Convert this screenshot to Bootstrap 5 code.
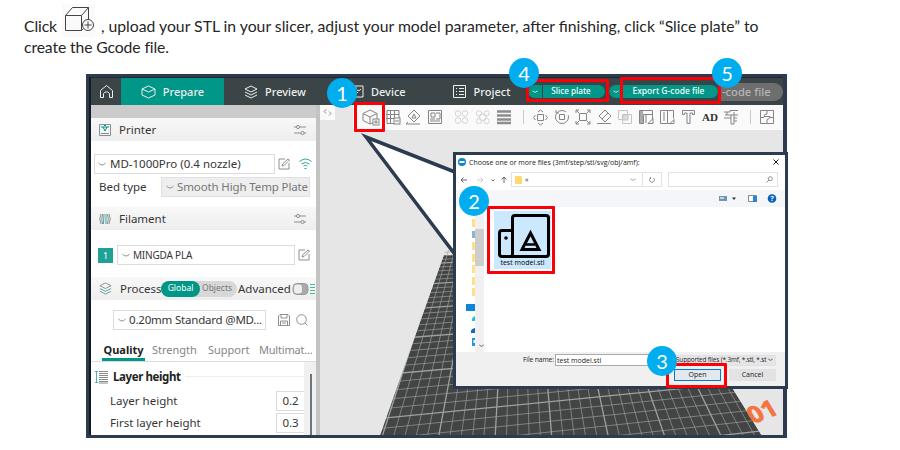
<!DOCTYPE html>
<html lang="en">
<head>
<meta charset="utf-8">
<meta name="viewport" content="width=device-width, initial-scale=1">
<title>Slicing guide</title>
<link rel="stylesheet" href="https://cdn.jsdelivr.net/npm/bootstrap@5.3.0/dist/css/bootstrap.min.css">
<style>
:root{--teal:#009688;--navy:#2d3b50;--hot:#fb0007;--blue:#00adef}
body{width:900px;height:450px;overflow:hidden;background:#fff;color:#363636;font:11.5px/1 "Noto Sans","Open Sans",sans-serif}
svg{display:block;flex:none;fill:none;stroke:currentColor;stroke-width:1}
.solid{stroke:none}
.intro{height:74px;padding:4px 0 0 24px;font:15.75px/20px Lato,"Open Sans",sans-serif;color:#262626;white-space:nowrap}
.intro-top{height:33px}
.intro-top span{padding-top:12px}
.tight{letter-spacing:-.13px}
.cube-shot{width:33px;height:33px;margin:0 6px 0 5px;background:#fafafa;color:#444}
.stage{width:701px;height:364px;margin-left:86px}
.frame{border:3px solid var(--navy);border-right-width:4px;background:#e6e6e6;overflow:hidden;box-shadow:inset 2px 1px 0 #151b20}
.topbar{height:28px;margin-left:2px;background:#3b4446;color:#eceeee;font-size:11px;font-weight:500;border-top:1px solid #20282b}
.topbar>div{height:27px}
.home{width:30px}
.prep{width:103px;background:var(--teal);gap:7px}
.pill{height:13px;background:var(--teal);color:#fff;font-size:8.200px;font-weight:500;white-space:nowrap}
.grayed{background:#6e6e6e;color:#b5b5b5;height:18px;font-size:11.200px}
.left{width:225px;background:#fff;margin-left:2px;white-space:nowrap}
.strip{height:13px;background:#cbcbcb}
.head{height:23px;background:linear-gradient(#f8f8f8,#eee);padding:0 10px 0 8px}
.box{border:1px solid #dcdcdc;background:#fff;overflow:hidden}
.ic{color:#8b8f90}
.gut{width:4px;background:#c3c3c3}
.tools{height:25px;margin-left:33px;background:#fafafa;color:#858585}
.fold{width:15px;height:15px;background:#fafafa}
.tabs-row{height:22px;font-size:11px;color:#858585;border-bottom:1px solid #ddd}
.tabs-row b{color:#222;border-bottom:3px solid var(--teal);height:21px;width:43px}
.val{width:28px;height:20px;font-size:11.5px;border-right:0}
.scroller{width:12px;background:#f0f0f0;padding:12px 4px 0 6px}
.snug{letter-spacing:-.2px}
.title-b{letter-spacing:-.4px;color:#222}
.dlg{left:367px;top:78px;width:335px;height:237px;border:3px solid var(--navy);background:#fff;font:7px/1 "Open Sans",sans-serif;color:#222;white-space:nowrap}
.dlg .box{border-color:#e2e2e2}
.cmd{height:18px;background:#f4f6f9}
.foot{height:34px;background:#f0f0f0}
.sidebar{width:28px}
.sbar{width:9px;background:#f0f0f0}
.picked{width:57px;height:58px;background:#cce8ff;color:#000}
.filter-text{font-size:6.400px;letter-spacing:-.13px}
.dot{width:30px;height:30px;border-radius:50%;background:var(--blue);color:#fff;font:20px/30px Lato,sans-serif;text-align:center;z-index:5}
.ring{border:3px solid var(--hot);z-index:4;border-radius:1px}
</style>
<script src="https://cdn.jsdelivr.net/npm/bootstrap@5.3.0/dist/js/bootstrap.bundle.min.js"></script>
</head>
<body>
<svg width="0" height="0" class="position-absolute">
<symbol id="edit" viewBox="0 0 12 12"><path d="M7 1H1v10h10V5M4 8l1-2.500L10 1l1.500 1L6 7.500z"/></symbol>
<symbol id="chev" viewBox="0 0 8 5"><path d="M.5 1q3.500 4 7 0"/></symbol>
<symbol id="tune" viewBox="0 0 12 12"><path d="M0 3h2.500M5.500 3H12M0 9h7M10 9h2"/><circle cx="4" cy="3" r="1.600"/><circle cx="8.500" cy="9" r="1.600"/></symbol>
<symbol id="layers" viewBox="0 0 14 14"><path d="M7 1l6 3-6 3-6-3zM1 7l6 3 6-3M1 10l6 3 6-3"/></symbol>
</svg>

<div class="intro">
  <div class="intro-top d-flex"><span class="tight">Click</span>
    <svg class="cube-shot" viewBox="0 0 33 33"><path d="M3.500 11.500h16v15h-16zM3.500 11.500l7-8h16l-7 8M26.500 3.500v12M19.500 26.500l2-2"/><circle cx="26" cy="21" r="5.500"/><path d="M22.500 21h7M26 17.500v7"/></svg>
    <span>, upload your STL in your slicer, adjust your model parameter, after finishing, click “Slice plate” to</span></div>
  <div class="tight">create the Gcode file.</div>
</div>

<main class="stage position-relative">
<div class="frame h-100 d-flex flex-column">
  <div class="topbar d-flex align-items-center flex-shrink-0">
    <div class="home d-flex align-items-center justify-content-center"><svg width="15" height="15" viewBox="0 0 15 15"><path d="M1.500 6.500l6-5 6 5v7h-3v-4q-3-3.500-6 0v4h-3z"/></svg></div>
    <div class="prep d-flex align-items-center justify-content-center"><svg width="15" height="14" viewBox="0 0 15 14"><path d="M7.500 1L14 4v6l-6.500 3L1 10V4zM1 4l6.500 3L14 4"/></svg><span>Prepare</span></div>
    <div class="d-flex align-items-center" style="margin-left:20px;gap:7px"><svg width="14" height="14"><use href="#layers"/></svg><span>Preview</span></div>
    <div class="d-flex align-items-center" style="margin-left:45px;gap:7px"><svg width="13" height="13" viewBox="0 0 13 13"><path d="M1 1h11v11H1zM4 10l3-3M3 3h3M6 5q2 2 4-1"/></svg><span>Device</span></div>
    <div class="d-flex align-items-center" style="margin-left:47px;gap:8px"><svg width="13" height="13" viewBox="0 0 13 13"><path d="M.5.5h12v12H.500zM3 3.500h1M6 3.500h5M3 6.500h1M6 6.500h5M3 9.500h1M6 9.500h5"/></svg><span>Project</span></div>
    <div class="d-flex align-items-center ms-auto">
      <span class="pill rounded-start-pill d-flex align-items-center justify-content-center" style="width:14px"><svg width="6" height="4"><use href="#chev"/></svg></span>
      <span class="pill rounded-end-pill d-flex align-items-center justify-content-center" style="width:62px;margin-left:1px;padding-right:6px">Slice plate</span>
      <span class="pill rounded-start-pill d-flex align-items-center justify-content-center" style="width:13px;margin-left:4px"><svg width="6" height="4"><use href="#chev"/></svg></span>
      <span class="pill rounded-end-pill d-flex align-items-center justify-content-center" style="width:95px;margin-left:1px;padding-right:4px;font-size:8.500px">Export G-code file</span>
      <span class="grayed rounded-end-pill d-flex align-items-center" style="width:65px;padding-left:4px">-code file</span>
    </div>
  </div>

  <div class="d-flex flex-grow-1">
    <aside class="left flex-shrink-0">
      <div class="strip"></div>
      <div class="head d-flex align-items-center"><svg class="ic" width="12" height="12" viewBox="0 0 12 12"><path d="M.5.5h11v11H.500zM2 9.500h8"/><path stroke="#009688" d="M2 3h8M4 3l2 4 2-4M5 1.500h2"/></svg><span style="margin-left:8px">Printer</span><svg class="ic ms-auto" width="12" height="12"><use href="#tune"/></svg></div>
      <div class="d-flex align-items-center" style="margin:13px 0 0 3px">
        <div class="box d-flex align-items-center" style="width:181px;height:20px;padding-left:3px;gap:4px"><svg class="ic" width="8" height="5"><use href="#chev"/></svg><span>MD-1000Pro (0.4 nozzle)</span></div>
        <svg class="ic" style="margin-left:3px" width="12" height="12"><use href="#edit"/></svg>
        <svg style="margin-left:9px;color:#2aa79b" width="13" height="12" viewBox="0 0 13 12"><path d="M.5 3.500q6-5 12 0M2.500 6q4-3 8 0M4.500 8q2-1.500 4 0M5.500 10.500h2"/></svg>
      </div>
      <div class="d-flex align-items-center" style="margin:3px 0 0 8px">
        <span style="width:62px">Bed type</span>
        <div class="d-flex align-items-center border" style="width:149px;height:20px;background:#eee;color:#777;padding-left:4px;gap:3px"><svg class="ic" width="8" height="5"><use href="#chev"/></svg><span style="letter-spacing:-.13px">Smooth High Temp Plate</span></div>
      </div>
      <div class="head d-flex align-items-center" style="margin-top:10px"><svg class="ic" width="12" height="12" viewBox="0 0 12 12"><path d="M2 1q-2.500 5 0 10M10 1q2.500 5 0 10M3.500 1q-1.500 5 0 10M8.500 1q1.500 5 0 10"/><path stroke="#35aba0" d="M5 1l-.5 10M7 1v10"/></svg><span style="margin-left:8px">Filament</span><svg class="ic ms-auto" width="12" height="12"><use href="#tune"/></svg></div>
      <div class="d-flex align-items-center" style="margin:15px 0 0 7px">
        <span class="text-white text-center" style="width:15px;height:15px;background:#1ea295;font-size:9px;line-height:15px">1</span>
        <div class="box d-flex align-items-center" style="width:178px;height:20px;margin-left:4px;padding-left:4px;gap:3px;font-size:10px"><svg class="ic" width="8" height="5"><use href="#chev"/></svg><span class="snug">MINGDA PLA</span></div>
        <svg class="ic" style="margin-left:3px" width="12" height="12"><use href="#edit"/></svg>
      </div>
      <div class="head d-flex align-items-center pe-0 overflow-hidden" style="margin-top:12px"><svg class="ic" width="13" height="13" viewBox="0 0 14 14"><path d="M7 1l6 3-6 3-6-3zM1 10l6 3 6-3"/><path stroke="#35aba0" d="M1 7l6 3 6-3"/></svg><span style="margin-left:8px;width:41px">Process</span>
        <span class="d-flex align-items-center rounded-pill" style="width:76px;height:16px;background:#d8d8d8;font-size:8.500px;color:#777"><span class="rounded-pill text-white d-flex align-items-center justify-content-center" style="width:39px;height:16px;background:var(--teal)">Global</span><span style="margin-left:2px">Objects</span></span>
        <span style="margin-left:1px;width:54px">Advanced</span>
        <svg width="17" height="12" viewBox="0 0 17 12"><rect x="1" y=".5" width="15" height="11" rx="4" fill="#aaa" stroke="#999"/><rect x="2" y="1.500" width="8" height="9" rx="3" fill="#eee" stroke="none"/></svg>
        <svg width="6" height="12" viewBox="0 0 6 12"><path stroke="#4bb5aa" d="M1 1.500h5M1 4.500h5M1 7.500h5M1 10.500h5"/></svg></div>
      <div class="d-flex align-items-center" style="margin:10px 0 0 22px">
        <div class="box d-flex align-items-center" style="width:153px;height:20px;padding-left:4px;gap:3px"><svg class="ic" width="8" height="5"><use href="#chev"/></svg><span class="snug">0.20mm Standard @MD...</span></div>
        <svg class="ic" style="margin-left:12px" width="12" height="12" viewBox="0 0 12 12"><path d="M.5 2l1.500-1.500h8L11.500 2v9.500H.500zM3 .5V4h6V.500M2.500 11V7h7v4M4 9h4"/></svg>
        <svg class="ic" style="margin-left:6px" width="12" height="12" viewBox="0 0 12 12"><circle cx="5.500" cy="5.500" r="4.800"/><path d="M9 9l2.500 2.500"/></svg>
      </div>
      <div class="tabs-row d-flex" style="margin-top:10px;padding:0 0 0 11px;line-height:19px"><b class="text-center">Quality</b><span style="margin-left:7px;width:56px">Strength</span><span style="width:51px">Support</span><span class="snug">Multimat...</span></div>
      <div class="d-flex" style="height:74px">
        <div class="flex-grow-1" style="padding-top:4px">
          <div class="d-flex align-items-center" style="height:21px;padding-left:4px"><svg width="13" height="14" viewBox="0 0 13 14"><path stroke="#8a8a8a" d="M4 1.500h9M4 3.500h9M4 5.500h9M4 7.500h9M4 9.500h9M4 11.500h9M4 13h9"/><path stroke="#4bb5aa" d="M1.500 1v12M0 1.500h3M0 12.500h3"/></svg><b class="title-b" style="margin-left:5px">Layer height</b><hr class="flex-grow-1 my-0 ms-1" style="border-color:#bbb"></div>
          <div class="d-flex align-items-center justify-content-between" style="height:20px;margin-top:4px;padding-left:19px"><span>Layer height</span><span class="box val d-flex align-items-center justify-content-center">0.2</span></div>
          <div class="d-flex align-items-center justify-content-between" style="height:20px;margin-top:2px;padding-left:19px"><span>First layer height</span><span class="box val d-flex align-items-center justify-content-center">0.3</span></div>
        </div>
        <div class="scroller"><div class="h-100 bg-secondary"></div></div>
      </div>
    </aside>
    <div class="gut"></div>
    <section class="flex-grow-1 position-relative">
      <div class="tools"><svg width="430" height="25" viewBox="353 105 430 25">
        <g transform="translate(370 117)"><path d="M0-7l7 3.500v7L0 7l-7-3.500v-7zM-7-3.500L0 0l7-3.500M0 0v7"/><rect x="3" y="2" width="6" height="6" fill="#fafafa"/><path d="M4 5h4M6 3v4"/></g>
        <path d="M387 110.500h12v13h-12zM390.500 110v13M394.500 110v13M386 114.500h13M386 118.500h13"/><rect x="394" y="118" width="6" height="6" fill="#fafafa"/><path d="M395 121h4"/>
        <path d="M414 110l6 6-6 6-6-6zM406 124h14M408 122l-2 2M412 118l2-4 2 4z"/>
        <path d="M428.500 110.500h13v13h-13zM430 121h10M431 113h4v4h-4zM436 113h4v6h-4M430 119h5"/>
        <g stroke="#d5d5d5"><circle cx="458" cy="113.500" r="2.800"/><circle cx="465" cy="113.500" r="2.800"/><circle cx="458" cy="120.500" r="2.800"/><circle cx="465" cy="120.500" r="2.800"/><rect x="476.500" y="111" width="5" height="5" rx="2"/><rect x="484" y="111" width="5" height="5" rx="2"/><rect x="476.500" y="118.500" width="5" height="5" rx="2"/><rect x="484" y="118.500" width="5" height="5" rx="2"/><circle cx="482.700" cy="117.200" r="3.500"/></g>
        <path stroke-width="2.400" stroke="#8d8d8d" d="M497 111.500h14M497 115.500h14M497 119.500h14M497 123h14"/>
        <path stroke="#c9c9c9" d="M523.500 110v14M750.500 110v14"/>
        <path d="M537.500 114.500h6v6h-6zM538 112l2.500-2 2.500 2M538 123l2.500 2 2.500-2M535.500 115l-2 2.500 2 2.500M545.500 115l2 2.500-2 2.500"/>
        <circle cx="562" cy="117" r="6.500" stroke-dasharray="34 4"/><path d="M559.500 114.500h5v5h-5zM556 110v3h3"/>
        <path d="M579.500 113.500h7v7h-7zM576 113v-3h3M590 113v-3h-3M576 121v3h3M590 121v3h-3M576 110l3 3M590 110l-3 3M576 124l3-3M590 124l-3-3"/>
        <path d="M605 110l6 6-6 6-6-6zM602 119l6-6M597 123.500h14"/>
        <g stroke="#c5c5c5"><path d="M618.500 110.500h9v9h-9zM622.500 114.500h9v9h-9z"/><path d="M623 115h5v5h-5z" fill="#ddd"/></g>
        <path d="M639.500 110.500h13v4h-9v9h-4zM646 115v8M652.500 114v5M648 123.500l5-5v5z"/><path fill="#aaa" stroke="none" d="M640 111h3v12h-3z"/>
        <path d="M660.500 110.500h7v13h-7zM667.500 110.500h6v8M664 112v9M668 123.500h2M670 123.500l4-4v4z"/>
        <path d="M682.500 110.500h12v4h-2v-1.500h-2.500v10.500h-3v-10.500h-2.500v1.500h-2z"/>
        <text x="702" y="121" textLength="16" lengthAdjust="spacingAndGlyphs" font-family="Liberation Serif" font-weight="700" font-size="11" fill="#333" stroke="none">AD</text>
        <path d="M724 112h6v-1.500h8M725 115h13M724 118h7v-3M734 112v12h-3v-6M737 118h-3M734 121h3M727 112v3"/>
        <path d="M760.500 110.500h13v13h-13zM767 111v3q-3 0-3 2.500h6q0 2.500-3 3v4M761 117.500h3M770 117.500h3"/>
      </svg></div>
      <div class="fold position-absolute top-0 start-0"><svg class="ic" width="15" height="15" viewBox="0 0 15 15"><path d="M6.500 4.500l-2.500 2 2 2M9 6.500l2 2-2 2"/></svg></div>
      <svg width="463" height="306" viewBox="320 130 463 306">
        <path fill="#434544" stroke="none" d="M378.500 436L444 255H650L762 436z"/>
        <g id="gridlines" stroke="#9fa1a0"></g>
        <path fill="#e6e6e6" stroke="none" d="M320 130H488L443 257L378.500 440H320zM650 255L764 439H790V255z"/>
        <text transform="matrix(.95 -.36 .5 .82 753 424)" font-family="Open Sans" font-weight="700" font-size="25" fill="#f4733f" stroke="#f4733f" stroke-width=".7">01</text>
        <path fill="#fff" stroke="#2d3b50" stroke-width="3.500" d="M460 174L366 137L460 261z"/>
      </svg>
    </section>
  </div>
</div>

<div class="dlg position-absolute d-flex flex-column">
  <div class="d-flex align-items-center" style="height:15px;padding:0 6px 0 2px;gap:3px"><svg class="solid" width="8" height="8" viewBox="0 0 8 8"><circle cx="4" cy="4" r="4" fill="#0a87c9"/><path d="M1.500 3h5v2h-5z" fill="#fff"/></svg><span>Choose one or more files (3mf/step/stl/svg/obj/amf):</span><svg class="ms-auto" width="6" height="6" viewBox="0 0 6 6"><path d="M.5.5l5 5M5.500.5l-5 5"/></svg></div>
  <div class="d-flex align-items-center" style="height:20px;padding-left:4px">
    <svg width="48" height="8" viewBox="0 0 48 8"><g stroke="#666"><path d="M1 4h6M3.500 1.500L1 4l2.500 2.500"/><path stroke="#ccc" d="M17 4h6M20.500 1.500L23 4l-2.500 2.500"/><path d="M31.500 3.500l1.500 1.500 1.500-1.500M44 7V1M41.500 3.500L44 1l2.500 2.500"/></g></svg>
    <div class="box d-flex align-items-center" style="width:132px;height:15px;margin-left:3px;padding:0 6px 0 3px"><svg class="solid" width="7" height="8"><path fill="#ffd970" d="M0 0h6l1 1v7H0z"/></svg><span style="margin-left:3px">«</span><svg class="ic ms-auto" width="6" height="4"><use href="#chev"/></svg></div>
    <div class="box d-flex align-items-center justify-content-center" style="width:20px;height:15px;margin-left:-1px"><svg class="ic" width="6" height="6" viewBox="0 0 6 6"><path d="M4.500 1a2.400 2.400 0 1 1-3 0M1.500 0v2"/></svg></div>
    <div class="box d-flex align-items-center justify-content-end" style="width:110px;height:15px;margin-left:6px;padding-right:4px"><svg class="ic" width="7" height="7" viewBox="0 0 7 7"><circle cx="4.300" cy="2.700" r="2"/><path d="M3 4L.5 6.500"/></svg></div>
  </div>
  <div class="cmd d-flex align-items-center justify-content-end" style="padding-right:8px"><svg class="solid" width="62" height="9" viewBox="0 0 62 9"><path fill="#7393ae" d="M4 2h8v5H4z"/><path fill="#b8d5ee" d="M5 3h4v2H5z"/><path fill="#333" d="M17 3.500h4l-2 2.500z"/><path fill="#fff" stroke="#888" d="M33.500 1.500h8v6h-8z"/><path fill="#2b83d6" d="M38 2h4v6h-4z"/><circle cx="57" cy="4.500" r="4.300" fill="#0862b8"/><text x="55.300" y="7.200" font-size="7.500" font-weight="700" fill="#fff">?</text></svg></div>
  <div class="d-flex flex-grow-1">
    <div class="sidebar d-flex"><svg class="solid" width="19" height="145" viewBox="456 207 19 145"><path fill="#ffe08a" d="M472 219h3v8h-3zM472 242h3v8h-3zM472 254h3v8h-3zM472 265h3v8h-3zM472 277h3v8h-3zM472 288h3v8h-3z"/><path fill="#8bb4d4" d="M472 231h3v7h-3z"/><path fill="#1184d8" d="M466 304h9v7h-9z"/><path fill="#21c2d6" d="M475 316q-4 2-3 5h3z"/><path fill="#1268c0" d="M475 328q-5 1-4 5h4z"/><path fill="#2196dd" d="M472 338h3v8h-3z"/><path fill="#fff" d="M473.500 340h1.500v3h-1.500z"/></svg>
      <div class="sbar d-flex flex-column"><div style="height:37px;margin-top:22px;background:#cdcdcd"></div><svg class="mt-auto mb-1 ms-1" width="5" height="4"><use href="#chev"/></svg></div></div>
    <div style="padding:4px 0 0 10px"><div class="picked text-center"><svg class="mx-auto" width="57" height="48" viewBox="492 210 57 48"><g stroke-width="3"><path d="M510.500 256V217q0-2.500 2.500-2.500h31q2.500 0 2.500 2.500v36q0 2.500-2.500 2.500h-44q-2.500 0-2.500-2.500v-21q0-2.500 2.500-2.500h11"/><path d="M528.500 232l8.500 16.500h-17z"/><path stroke-width="2.500" d="M524 243.500h9"/></g><circle cx="504" cy="237" r="1.800" fill="#000" stroke="none"/></svg><span>test model.stl</span></div></div>
  </div>
  <div class="foot">
    <div style="width:320px;padding-top:2px">
      <div class="d-flex align-items-center" style="height:12px;padding-left:67px"><span style="width:32px;font-size:6.700px;letter-spacing:-.1px">File name:</span><div class="box d-flex align-items-center" style="width:117px;height:12px;padding-left:1px;border-color:#aaa"><span>test model.stl</span></div><div class="d-flex align-items-center border" style="width:104px;height:11px;background:#e5e5e5;padding:0 2px 0 3px"><span class="filter-text">Supported files (*.3mf, *.stl, *.st</span><svg class="ms-auto" width="5" height="4"><use href="#chev"/></svg></div></div>
      <div class="d-flex justify-content-end" style="margin-top:3px;gap:8px"><span class="text-center" style="width:47px;height:12px;line-height:9px;border:1.500px solid #0078d7;background:#e3e8ed">Open</span><span class="text-center border" style="width:47px;height:12px;line-height:10px;background:#e3e3e3">Cancel</span></div></div>
  </div>
</div>

<div class="ring position-absolute" style="left:268px;top:28px;width:31px;height:30px"></div>
<div class="ring position-absolute" style="left:440px;top:5px;width:83px;height:23px"></div>
<div class="ring position-absolute" style="left:534px;top:3px;width:101px;height:27px"></div>
<div class="ring position-absolute" style="left:401px;top:132px;width:68px;height:68px"></div>
<div class="ring position-absolute" style="left:580px;top:289px;width:61px;height:25px"></div>
<div class="dot position-absolute" style="left:241px;top:4px">1</div>
<div class="dot position-absolute" style="left:373px;top:112px">2</div>
<div class="dot position-absolute" style="left:561px;top:272px">3</div>
<div class="dot position-absolute" style="left:423px;top:-16px">4</div>
<div class="dot position-absolute" style="left:626px;top:-16px">5</div>
</main>
<script>
// Perspective grid of the print bed: two families of lines, every fifth one brighter.
const vx = 518, vy = 15, g = document.getElementById('gridlines');
let out = '';
for (let i = -6; i <= 30; i++) {
  const x = 438 + 11.4 * i, t = (440 - 250) / (440 - vy);
  out += `<line x1="${x}" y1="440" x2="${x + (vx - x) * t}" y2="250" stroke-width="${i % 5 ? .65 : 1.3}"/>`;
}
for (let n = -14; n <= 28; n++) {
  const y = 20 + 1 / (.002513 + .000064 * n), x = 386 + (418 - y) * .35, s = -.1 * (y - 20) / 400;
  out += `<line x1="${x - 20}" y1="${y - 20 * s}" x2="790" y2="${y + (790 - x) * s}" stroke-width="${n % 5 ? .65 : 1.3}"/>`;
}
g.innerHTML = out;
</script>
</body>
</html>
